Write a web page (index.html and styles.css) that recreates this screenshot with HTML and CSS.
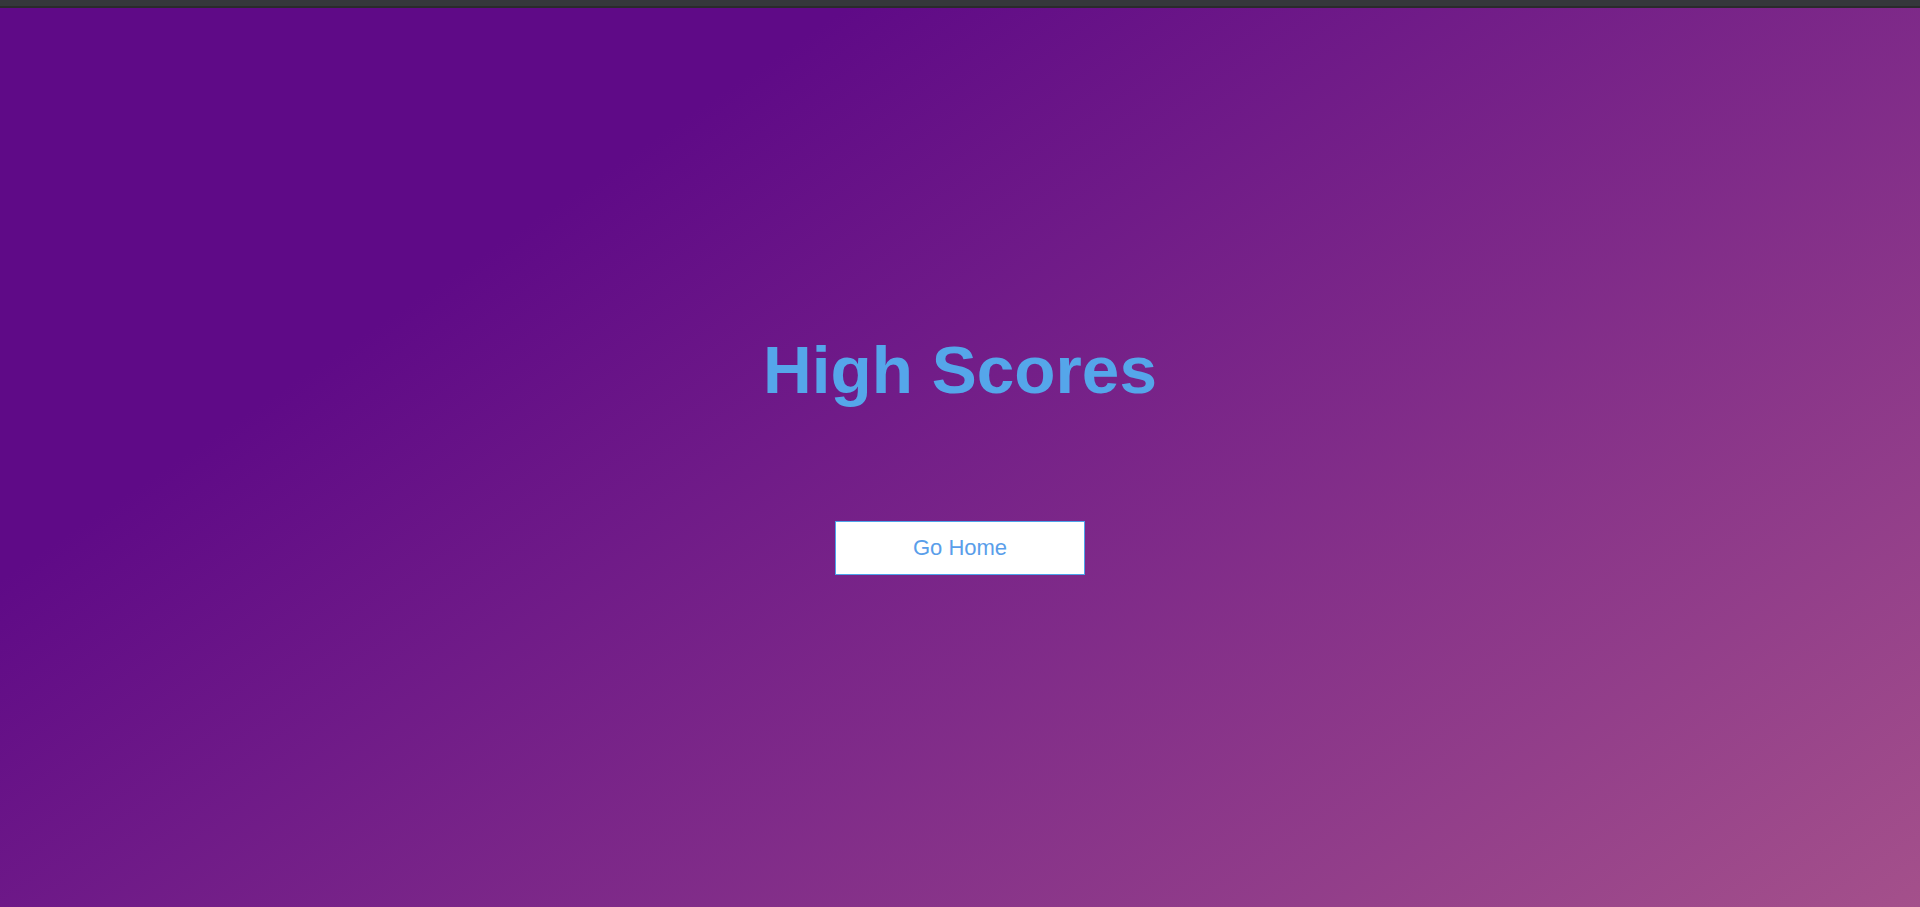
FILE: index.html
```html
<!DOCTYPE html>
<html lang="en">
<head>
<meta charset="utf-8">
<title>High Scores</title>
<link rel="stylesheet" href="styles.css">
</head>
<body>
<div class="topbar"></div>
<main class="page">
  <div class="panel">
    <h1 class="title">High Scores</h1>
    <button class="home-btn" type="button">Go Home</button>
  </div>
</main>
</body>
</html>
```
FILE: styles.css
```css
html, body {
  margin: 0;
  padding: 0;
  height: 100%;
}
body {
  font-family: "Liberation Sans", Arial, sans-serif;
  display: flex;
  flex-direction: column;
  background: #5f0a87;
}
.topbar {
  height: 6px;
  background: #35373b;
  border-bottom: 2px solid #2a2a2c;
  flex: none;
}
.page {
  flex: 1;
  display: flex;
  align-items: center;
  justify-content: center;
  background-color: #a4508b;
  background-image: linear-gradient(326deg, #a4508b 0%, #5f0a87 74%);
}
.panel {
  display: flex;
  flex-direction: column;
  align-items: center;
  margin-bottom: 9px;
}
.title {
  margin: 0 0 113px 0;
  font-size: 67.5px;
  font-weight: 700;
  line-height: normal;
  color: #55a6ea;
}
.home-btn {
  width: 250px;
  height: 54px;
  background: #fff;
  border: 1px solid #4da3ea;
  color: #5a9eea;
  font-family: "Liberation Sans", Arial, sans-serif;
  font-size: 22px;
  padding: 0;
  margin: 0;
  cursor: pointer;
}
```
